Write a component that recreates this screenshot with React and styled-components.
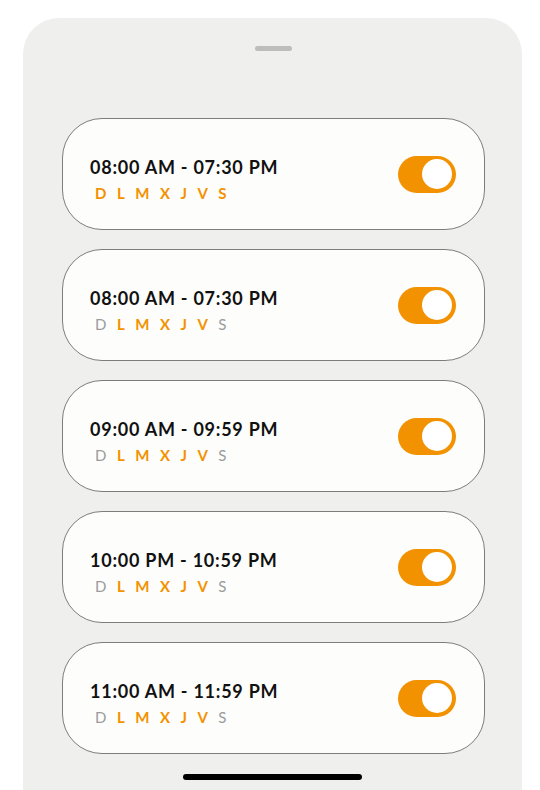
import styled, { createGlobalStyle } from "styled-components";

const GlobalStyle = createGlobalStyle`
  html, body {
    margin: 0;
    padding: 0;
    background: #ffffff;
  }
  body {
    font-family: "Lato", "Open Sans", sans-serif;
  }
`;

const schedules = [
  { time: "08:00 AM - 07:30 PM", days: [1, 1, 1, 1, 1, 1, 1] },
  { time: "08:00 AM - 07:30 PM", days: [0, 1, 1, 1, 1, 1, 0] },
  { time: "09:00 AM - 09:59 PM", days: [0, 1, 1, 1, 1, 1, 0] },
  { time: "10:00 PM - 10:59 PM", days: [0, 1, 1, 1, 1, 1, 0] },
  { time: "11:00 AM - 11:59 PM", days: [0, 1, 1, 1, 1, 1, 0] },
];

const letters = ["D", "L", "M", "X", "J", "V", "S"];

const App = () => {
  return (
    <>
      <GlobalStyle />
      <Page>
        <Sheet>
          <Handle />
          <List>
            {schedules.map((s, i) => (
              <Card key={i}>
                <Info>
                  <Time>{s.time}</Time>
                  <Days>
                    {letters.map((l, j) => (
                      <Day key={j} $active={s.days[j]}>
                        {l}
                      </Day>
                    ))}
                  </Days>
                </Info>
                <Toggle>
                  <Knob />
                </Toggle>
              </Card>
            ))}
          </List>
          <HomeBar />
        </Sheet>
      </Page>
    </>
  );
};
export default App;

const Page = styled.div`
  width: 540px;
  height: 790px;
  padding-top: 18px;
  box-sizing: border-box;
  display: flex;
  justify-content: flex-start;
  overflow: hidden;
`;

const Sheet = styled.div`
  margin-left: 23px;
  width: 499px;
  height: 772px;
  background: #efefed;
  border-radius: 36px 36px 0 0;
  display: flex;
  flex-direction: column;
  align-items: center;
  padding-top: 28px;
  box-sizing: border-box;
`;

const Handle = styled.div`
  width: 37px;
  height: 5px;
  border-radius: 3px;
  background: #bdbdbb;
  margin-left: 2px;
`;

const List = styled.div`
  display: flex;
  flex-direction: column;
  gap: 19px;
  margin-top: 67px;
  margin-left: 2px;
`;

const Card = styled.div`
  width: 423px;
  height: 112px;
  box-sizing: border-box;
  border: 1px solid #7d7d7d;
  border-radius: 40px;
  background: #fdfdfb;
  display: flex;
  align-items: center;
  justify-content: space-between;
  padding: 9px 28px 0 27px;
`;

const Info = styled.div`
  display: flex;
  flex-direction: column;
  gap: 6px;
`;

const Time = styled.div`
  font-size: 18px;
  font-weight: 700;
  color: #111111;
  letter-spacing: 0.75px;
`;

const Days = styled.div`
  display: flex;
  gap: 10px;
  padding-left: 5px;
`;

const Day = styled.span`
  font-size: 15px;
  font-weight: ${(p) => (p.$active ? 700 : 400)};
  letter-spacing: 0.5px;
  color: ${(p) => (p.$active ? "#f39200" : "#9b9b9b")};
`;

const Toggle = styled.div`
  width: 58px;
  height: 37px;
  margin-top: -9px;
  border-radius: 19px;
  background: #f39200;
  display: flex;
  align-items: center;
  justify-content: flex-end;
  padding-right: 4px;
  box-sizing: border-box;
`;

const Knob = styled.div`
  width: 30px;
  height: 30px;
  border-radius: 50%;
  background: #ffffff;
`;

const HomeBar = styled.div`
  margin-top: auto;
  margin-bottom: 10px;
  width: 179px;
  height: 6px;
  border-radius: 3px;
  background: #000000;
`;
